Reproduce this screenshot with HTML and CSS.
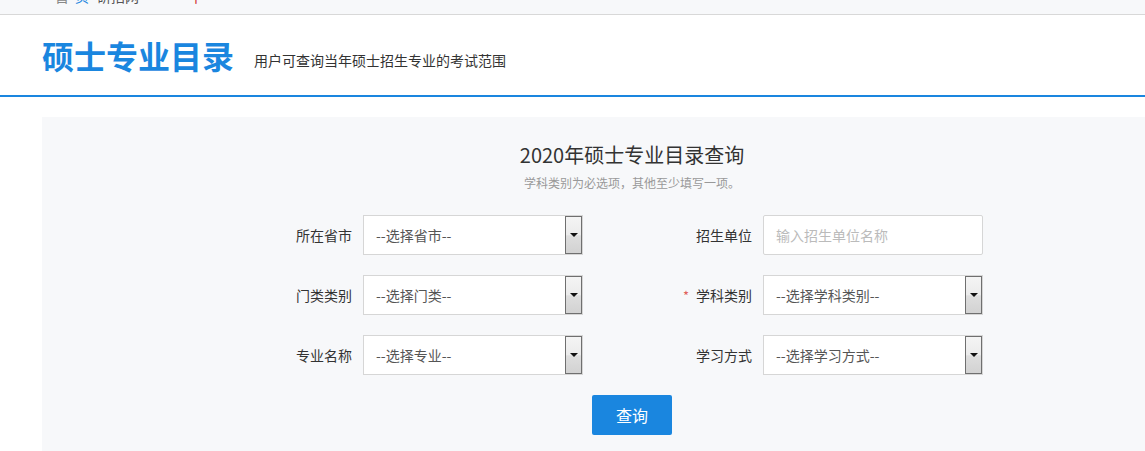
FILE: index.html
```html
<!DOCTYPE html>
<html lang="zh-CN">
<head>
<meta charset="utf-8">
<title>硕士专业目录</title>
<link rel="stylesheet" href="styles.css">
</head>
<body>
<div class="topbar">
  <div class="crumbs"><span class="c-gray">首</span><span class="c-blue">页</span><span class="c-dark">研招网</span><span class="c-red">丨</span></div>
</div>
<header class="header">
  <h1 class="title">硕士专业目录</h1>
  <p class="subtitle">用户可查询当年硕士招生专业的考试范围</p>
</header>
<main class="panel">
  <h2 class="panel-title">2020年硕士专业目录查询</h2>
  <p class="panel-note">学科类别为必选项，其他至少填写一项。</p>
  <div class="form">
    <div class="row">
      <div class="field">
        <label class="label">所在省市</label>
        <div class="select"><span class="value">--选择省市--</span><span class="arrow"></span></div>
      </div>
      <div class="field">
        <label class="label">招生单位</label>
        <div class="input"><span class="placeholder">输入招生单位名称</span></div>
      </div>
    </div>
    <div class="row">
      <div class="field">
        <label class="label">门类类别</label>
        <div class="select"><span class="value">--选择门类--</span><span class="arrow"></span></div>
      </div>
      <div class="field">
        <label class="label"><span class="req">*</span>学科类别</label>
        <div class="select"><span class="value">--选择学科类别--</span><span class="arrow"></span></div>
      </div>
    </div>
    <div class="row">
      <div class="field">
        <label class="label">专业名称</label>
        <div class="select"><span class="value">--选择专业--</span><span class="arrow"></span></div>
      </div>
      <div class="field">
        <label class="label">学习方式</label>
        <div class="select"><span class="value">--选择学习方式--</span><span class="arrow"></span></div>
      </div>
    </div>
  </div>
  <button class="btn">查询</button>
</main>
</body>
</html>
```
FILE: styles.css
```css
html {
  overflow: hidden;
}
body {
  margin: 0;
  font-family: "Noto Sans CJK SC", "Noto Sans", "Liberation Sans", sans-serif;
  color: #333;
  background: #fff;
}
.topbar {
  height: 14px;
  background: #f7f8fa;
  border-bottom: 1px solid #d8d8d8;
  overflow: hidden;
}
.crumbs {
  margin-top: -13px;
  padding-left: 55px;
  font-size: 14px;
  line-height: 18px;
  display: flex;
  gap: 6px;
}
.c-gray { color: #888; }
.c-blue { color: #1a86df; }
.c-dark { color: #555; margin-left: 2px; }
.c-red { color: #d0312d; margin-left: 44px; }

.header {
  height: 80px;
  padding-left: 42px;
  display: flex;
  align-items: center;
  border-bottom: 2px solid #1a86df;
}
.title {
  margin: 0;
  font-size: 32px;
  line-height: 40px;
  font-weight: 700;
  color: #1a86df;
}
.subtitle {
  margin: 10px 0 0 20px;
  font-size: 14px;
  line-height: 20px;
  color: #333;
}

.panel {
  margin: 20px 0 0 42px;
  width: 1180px;
  height: 334px;
  background: #f7f8fa;
  padding-top: 24px;
}
.panel-title {
  margin: 0;
  text-align: center;
  font-size: 20px;
  line-height: 28px;
  font-weight: 400;
  color: #333;
}
.panel-note {
  margin: 5px 0 0;
  text-align: center;
  font-size: 12px;
  line-height: 18px;
  color: #999;
}
.form {
  width: 720px;
  margin: 23px auto 0;
  display: flex;
  flex-direction: column;
  gap: 20px;
}
.row {
  display: flex;
  gap: 89px;
}
.field {
  display: flex;
  align-items: center;
}
.label {
  width: 80px;
  padding-right: 11px;
  text-align: right;
  font-size: 14px;
  color: #333;
}
.req {
  color: #e0605a;
  margin-right: 7px;
  font-size: 13px;
}
.select,
.input {
  width: 220px;
  height: 40px;
  box-sizing: border-box;
  border: 1px solid #d6d6d6;
  background: #fff;
  display: flex;
  align-items: stretch;
}
.value,
.placeholder {
  flex: 1;
  padding-left: 12px;
  font-size: 14px;
  line-height: 38px;
  color: #555;
}
.placeholder {
  color: #bbb;
}
.input {
  border-radius: 2px;
}
.arrow {
  width: 15px;
  border: 1px solid #6f6f6f;
  background: linear-gradient(#f4f4f4 0%, #ebebeb 50%, #dedede 52%, #d2d2d2 100%);
  display: flex;
  align-items: center;
  justify-content: center;
}
.arrow::after {
  content: "";
  width: 0;
  height: 0;
  border-left: 4px solid transparent;
  border-right: 4px solid transparent;
  border-top: 4px solid #111;
}
.btn {
  display: block;
  margin: 20px auto 0;
  width: 80px;
  height: 40px;
  border: 0;
  border-radius: 2px;
  background: #1a86df;
  color: #fff;
  font-family: inherit;
  font-size: 16px;
  cursor: pointer;
}
```
